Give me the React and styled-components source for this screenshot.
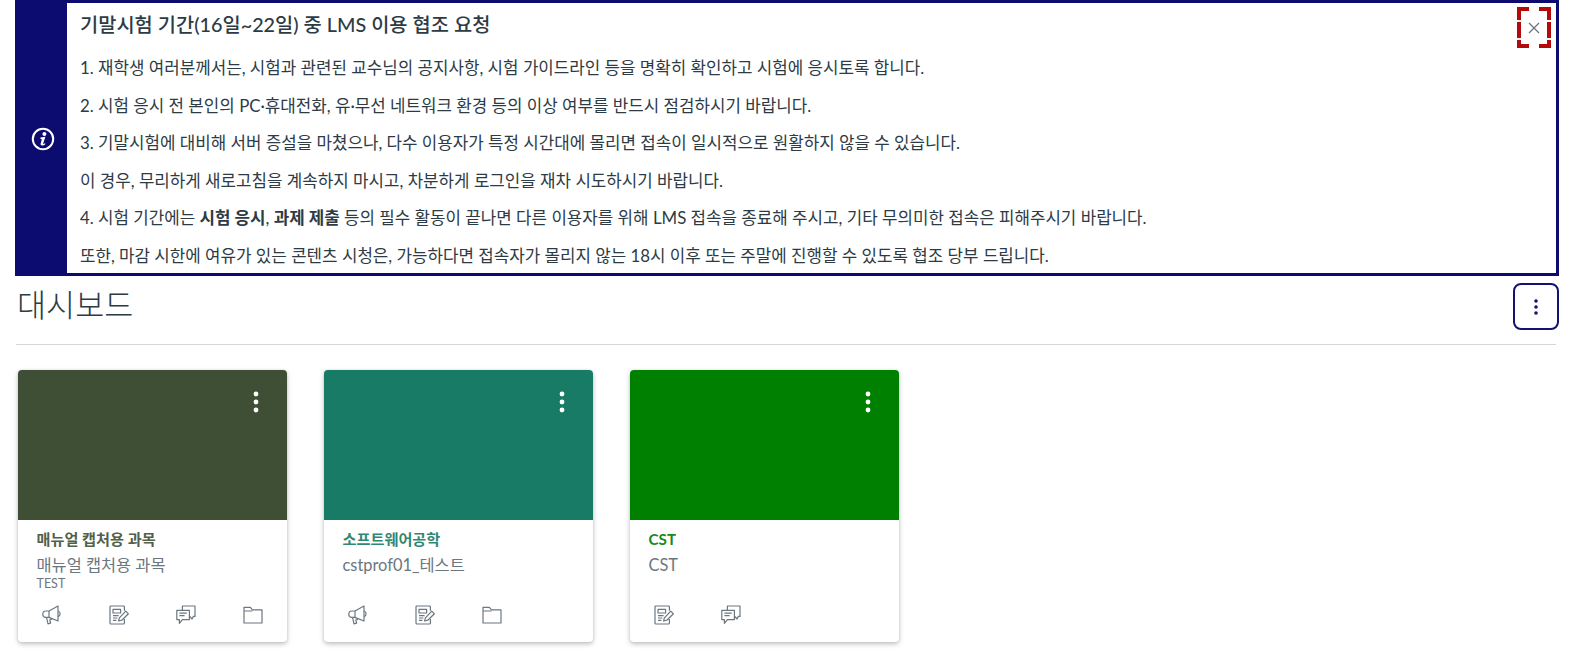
import styled, { createGlobalStyle } from "styled-components"

const GlobalStyle = createGlobalStyle`
    html, body {
        margin: 0;
        padding: 0;
        background: #fff;
        font-family: Lato, "Noto Sans CJK KR", sans-serif;
        color: #273540;
    }
`

const notices = [
    <>1. 재학생 여러분께서는, 시험과 관련된 교수님의 공지사항, 시험 가이드라인 등을 명확히 확인하고 시험에 응시토록 합니다.</>,
    <>2. 시험 응시 전 본인의 PC·휴대전화, 유·무선 네트워크 환경 등의 이상 여부를 반드시 점검하시기 바랍니다.</>,
    <>3. 기말시험에 대비해 서버 증설을 마쳤으나, 다수 이용자가 특정 시간대에 몰리면 접속이 일시적으로 원활하지 않을 수 있습니다.</>,
    <>이 경우, 무리하게 새로고침을 계속하지 마시고, 차분하게 로그인을 재차 시도하시기 바랍니다.</>,
    <>4. 시험 기간에는 <b>시험 응시</b>, <b>과제 제출</b> 등의 필수 활동이 끝나면 다른 이용자를 위해 LMS 접속을 종료해 주시고, 기타 무의미한 접속은 피해주시기 바랍니다.</>,
    <>또한, 마감 시한에 여유가 있는 콘텐츠 시청은, 가능하다면 접속자가 몰리지 않는 18시 이후 또는 주말에 진행할 수 있도록 협조 당부 드립니다.</>,
]

const courses = [
    { color: "#3f4f36", code: "매뉴얼 캡처용 과목", name: "매뉴얼 캡처용 과목", term: "TEST", icons: ["notice", "task", "talk", "folder"] },
    { color: "#187b66", code: "소프트웨어공학", name: "cstprof01_테스트", icons: ["notice", "task", "folder"] },
    { color: "#008000", code: "CST", name: "CST", icons: ["task", "talk"] },
]

const CourseIcon = ({ type }) => {
    if (type === "notice") return (
        <svg width="20" height="20" viewBox="0 0 20 20" fill="none" stroke="currentColor" strokeWidth="1.2" strokeLinejoin="round">
            <path d="M16 1 L16 16 L7 12.4 L3.6 12.4 C1.6 12.4 0.8 10.8 0.8 9.2 C0.8 7.4 1.8 6 3.6 6 L7 6 Z" />
            <path d="M16 6 C18.8 6.8 18.8 10.6 16 11.6" />
            <path d="M7 6 L7 12.4" />
            <path d="M4.6 12.6 L6 18.8 L8.6 18.2 L7.8 15 L9.4 14.4 L9 13.2" />
        </svg>
    )
    if (type === "task") return (
        <svg width="20" height="20" viewBox="0 0 20 20" fill="none" stroke="currentColor" strokeWidth="1.2" strokeLinejoin="round">
            <path d="M15.4 5.8 L15.4 2 Q15.4 1 14.4 1 L2 1 Q1 1 1 2 L1 18 Q1 19 2 19 L14.4 19 Q15.4 19 15.4 18 L15.4 14" />
            <path d="M4 4.4 H11.6 V8 H4 Z" />
            <path d="M4 10.6 H9.6 M4 13 H8.4 M4 15.4 H7.4" />
            <path d="M9.6 16 L10.4 12.8 L16.8 6.2 L19.4 8.8 L12.8 15.2 Z" />
        </svg>
    )
    if (type === "talk") return (
        <svg width="20" height="20" viewBox="0 0 20 20" fill="none" stroke="currentColor" strokeWidth="1.2" strokeLinejoin="round">
            <path d="M6.4 5.4 L6.4 1 L19 1 L19 11.4 L17.4 11.4 L16 14 L13.8 11.4" />
            <path d="M0.8 5.4 H13.4 V14.6 H6.4 L3.4 18.4 L3.4 14.6 H0.8 Z" />
            <path d="M3.4 8.2 H10.8 M3.4 10.6 H8.6" />
        </svg>
    )
    return (
        <svg width="20" height="20" viewBox="0 0 20 20" fill="none" stroke="currentColor" strokeWidth="1.2" strokeLinejoin="round">
            <path d="M1 18 L1 2.4 L7.4 2.4 L9.4 4.8 L19 4.8 L19 18 Z" />
            <path d="M1 6 L9.4 6" />
        </svg>
    )
}

const Kebab = ({ color }) => (
    <svg width="6" height="24" viewBox="0 0 6 24" fill={color}>
        <circle cx="3" cy="4" r="2.4" />
        <circle cx="3" cy="12" r="2.4" />
        <circle cx="3" cy="20" r="2.4" />
    </svg>
)

const App = () => {
    return (
        <Page>
            <GlobalStyle />
            <Alert>
                <AlertSide>
                    <svg width="24" height="24" viewBox="0 0 24 24" fill="none">
                        <circle cx="12" cy="12" r="10.2" stroke="#fff" strokeWidth="2" />
                        <circle cx="13.4" cy="7" r="2" fill="#fff" />
                        <path d="M9.4 10.6 L14.4 9.8 L12.2 16.4 C12 17.2 12.6 17.3 14 16.2 L14.5 16.9 C12.6 18.8 9.2 19.2 9.6 16.8 L10.8 12.2 L9.4 11.8 Z" fill="#fff" />
                    </svg>
                </AlertSide>
                <AlertBody>
                    <AlertTitle>기말시험 기간(16일~22일) 중 LMS 이용 협조 요청</AlertTitle>
                    {notices.map((n, i) => <Notice key={i}>{n}</Notice>)}
                </AlertBody>
                <CloseBox>
                    <FocusRing width="34" height="41" viewBox="0 0 34 41" fill="none" stroke="#b50a0a" strokeWidth="4">
                        <path d="M2 0 V13 M2 15 V31 M2 33 V41 M32 0 V13 M32 15 V31 M32 33 V41" />
                        <path d="M0 2 H12 M22 2 H34 M0 39 H12 M22 39 H34" />
                    </FocusRing>
                    <svg width="12" height="12" viewBox="0 0 12 12" stroke="#6b7780" strokeWidth="1.3">
                        <path d="M1 1 L11 11 M11 1 L1 11" />
                    </svg>
                </CloseBox>
            </Alert>
            <HeaderRow>
                <Title>대시보드</Title>
                <OptionsButton><Kebab color="#13136f" /></OptionsButton>
            </HeaderRow>
            <Grid>
                {courses.map((c) => (
                    <Card key={c.code}>
                        <CardHero $color={c.color}>
                            <CardMenu><Kebab color="#fff" /></CardMenu>
                        </CardHero>
                        <CardInfo>
                            <CardCode $color={c.color}>{c.code}</CardCode>
                            <CardName>{c.name}</CardName>
                            <CardTerm>{c.term}</CardTerm>
                        </CardInfo>
                        <CardActions>
                            {c.icons.map((t) => <ActionIcon key={t}><CourseIcon type={t} /></ActionIcon>)}
                        </CardActions>
                    </Card>
                ))}
            </Grid>
        </Page>
    )
}

const Page = styled.div`
    width: 1573px;
    height: 653px;
    overflow: hidden;
    padding: 0 14px 0 15px;
    box-sizing: border-box;
`

const Alert = styled.div`
    position: relative;
    display: flex;
    height: 276px;
    box-sizing: border-box;
    border: 3px solid #0c0c70;
`

const AlertSide = styled.div`
    flex: 0 0 49px;
    background: #0c0c70;
    display: flex;
    align-items: center;
    justify-content: center;
    padding-top: 2px;
`

const AlertBody = styled.div`
    padding: 8px 0 0 13px;
    color: #2d3b45;
`

const AlertTitle = styled.div`
    font-size: 19.8px;
    line-height: 26px;
    font-weight: 500;
    margin-bottom: 19px;
`

const Notice = styled.p`
    margin: 0 0 13.5px;
    font-size: 16.84px;
    line-height: 24px;
    b { font-weight: 700; }
`

const CloseBox = styled.div`
    position: absolute;
    top: 4px;
    right: 5px;
    width: 34px;
    height: 41px;
    display: flex;
    align-items: center;
    justify-content: center;
`

const FocusRing = styled.svg`
    position: absolute;
    inset: 0;
`

const HeaderRow = styled.div`
    display: flex;
    justify-content: space-between;
    align-items: flex-start;
    height: 69px;
    padding: 7px 0 0 2px;
    position: relative;
    box-sizing: border-box;
    &::after {
        content: "";
        position: absolute;
        left: 1px;
        right: 3px;
        bottom: 0;
        height: 1px;
        background: #d7d7d7;
    }
`

const Title = styled.h1`
    margin: 0;
    font-size: 31.6px;
    line-height: 44px;
    font-weight: 300;
    color: #2d3b45;
`

const OptionsButton = styled.button`
    width: 46px;
    height: 47px;
    background: #fff;
    border: 2px solid #13136f;
    border-radius: 8px;
    display: flex;
    align-items: center;
    justify-content: center;
    padding: 0;
    svg { height: 18px; }
`

const Grid = styled.div`
    display: flex;
    gap: 37px;
    padding: 25px 0 0 3px;
`

const Card = styled.div`
    width: 269px;
    height: 272px;
    background: #fff;
    border-radius: 4px;
    box-shadow: 0 2px 5px rgba(0, 0, 0, 0.25), 0 0 2px rgba(0, 0, 0, 0.1);
    overflow: hidden;
    display: flex;
    flex-direction: column;
`

const CardHero = styled.div`
    position: relative;
    height: 150px;
    flex: none;
    background: ${(p) => p.$color};
`

const CardMenu = styled.div`
    position: absolute;
    top: 20px;
    right: 28px;
    line-height: 0;
`

const CardInfo = styled.div`
    padding: 9px 18.5px 0;
    height: 76px;
    box-sizing: border-box;
    flex: none;
`

const CardCode = styled.div`
    font-size: 15.2px;
    line-height: 20px;
    font-weight: 700;
    color: ${(p) => p.$color};
    opacity: 0.9;
`

const CardName = styled.div`
    font-size: 16.4px;
    line-height: 22px;
    margin-top: 5px;
    color: #6b7780;
`

const CardTerm = styled.div`
    font-size: 12.5px;
    line-height: 15px;
    color: #6b7780;
`

const CardActions = styled.div`
    display: flex;
    gap: 47px;
    padding: 9px 0 0 24px;
    color: #6b7780;
`

const ActionIcon = styled.span`
    display: block;
    width: 20px;
    height: 20px;
`

export default App
